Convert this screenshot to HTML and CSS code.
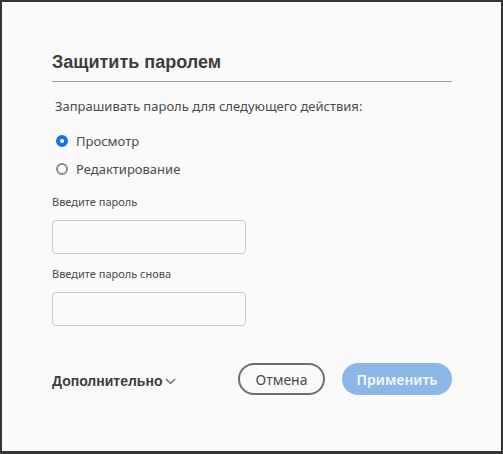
FILE: index.html
```html
<!DOCTYPE html>
<html lang="ru">
<head>
<meta charset="utf-8">
<link rel="stylesheet" href="styles.css">
</head>
<body>
<div class="window">
  <h1 class="title">Защитить паролем</h1>
  <div class="rule"></div>
  <p class="prompt">Запрашивать пароль для следующего действия:</p>
  <div class="radios">
    <label class="radio"><span class="dot checked"></span><span class="rlabel">Просмотр</span></label>
    <label class="radio"><span class="dot"></span><span class="rlabel">Редактирование</span></label>
  </div>
  <div class="field">
    <div class="flabel">Введите пароль</div>
    <div class="input"></div>
  </div>
  <div class="field">
    <div class="flabel">Введите пароль снова</div>
    <div class="input"></div>
  </div>
  <div class="footer">
    <div class="more">Дополнительно<svg class="chev" width="11" height="7" viewBox="0 0 11 7"><path d="M1 1.2 L5.5 5.5 L10 1.2" fill="none" stroke="#777" stroke-width="1.6"/></svg></div>
    <div class="buttons">
      <div class="btn cancel">Отмена</div>
      <div class="btn apply">Применить</div>
    </div>
  </div>
</div>
</body>
</html>
```
FILE: styles.css
```css
html, body { margin: 0; padding: 0; }
body { background: #fafafa; }
.window {
  width: 503px;
  height: 454px;
  box-sizing: border-box;
  border: 2px solid #353535;
  border-bottom-width: 3px;
  background: #fafafa;
  padding: 49px 49px 0 50px;
  font-family: "Noto Sans", "Open Sans", sans-serif;
  color: #4b4b4b;
}
.title {
  margin: 0;
  font-family: "Liberation Sans", Arial, sans-serif;
  font-weight: bold;
  font-size: 18px;
  line-height: 22px;
  color: #3d3d3d;
}
.rule {
  margin-top: 8px;
  height: 1px;
  width: 400px;
  background: #9b9b9b;
}
.prompt {
  margin: 15px 0 0 3px;
  font-size: 13px;
  line-height: 18px;
  color: #4b4b4b;
}
.radios {
  margin-top: 17px;
  display: flex;
  flex-direction: column;
  gap: 10px;
}
.radio {
  display: flex;
  align-items: center;
  height: 18px;
  margin-left: 4px;
}
.dot {
  width: 12px;
  height: 12px;
  box-sizing: border-box;
  border: 2px solid #8a8a8a;
  border-radius: 50%;
  background: #fff;
}
.dot.checked {
  border: 4px solid #1473e6;
  background: #fff;
}
.rlabel {
  margin-left: 8px;
  font-size: 13px;
  color: #4b4b4b;
}
.field { margin-top: 16px; }
.field + .field { margin-top: 12px; }
.flabel {
  font-size: 11px;
  line-height: 16px;
  color: #4b4b4b;
}
.input {
  margin-top: 10px;
  width: 194px;
  height: 34px;
  box-sizing: border-box;
  border: 1px solid #cacaca;
  border-radius: 4px;
  background: #fafafa;
}
.footer {
  margin-top: 37px;
  width: 400px;
  display: flex;
  align-items: center;
  justify-content: space-between;
}
.more {
  display: flex;
  align-items: center;
  font-family: "Liberation Sans", Arial, sans-serif;
  font-weight: bold;
  font-size: 14px;
  color: #3d3d3d;
  margin-top: 3px;
}
.chev { margin-left: 3px; margin-top: 2px; }
.buttons { display: flex; gap: 17px; }
.btn {
  height: 32px;
  box-sizing: border-box;
  border-radius: 16px;
  display: flex;
  align-items: center;
  justify-content: center;
  font-size: 14px;
}
.cancel {
  width: 87px;
  border: 2px solid #6e6e6e;
  color: #4b4b4b;
}
.apply {
  width: 110px;
  background: #8db7e6;
  color: #f4f8fd;
  font-weight: 600;
}
```
